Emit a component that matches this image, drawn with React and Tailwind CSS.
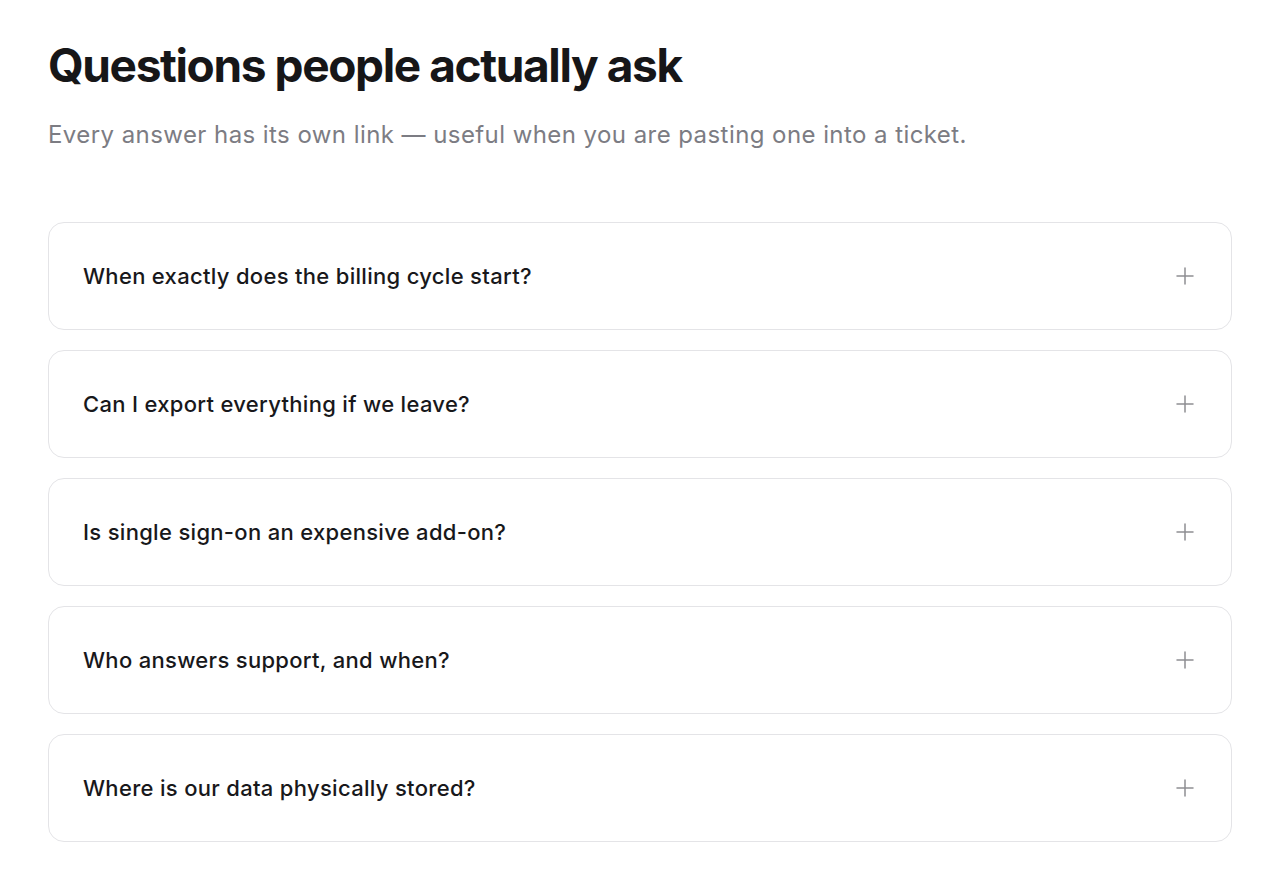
import { useState } from "react";

const questions = [
  "When exactly does the billing cycle start?",
  "Can I export everything if we leave?",
  "Is single sign-on an expensive add-on?",
  "Who answers support, and when?",
  "Where is our data physically stored?",
];

const PlusIcon = () => (
  <svg width="18" height="18" viewBox="0 0 18 18" fill="none" stroke="#8e8e93" strokeWidth="1.5" strokeLinecap="round">
    <path d="M9 1v16M1 9h16" />
  </svg>
);

const FaqItem = ({ question }) => {
  const [open, setOpen] = useState(false);
  return (
    <div className="rounded-2xl border border-[#e4e4e7] bg-white">
      <button
        onClick={() => setOpen(!open)}
        className="flex h-[106px] w-full items-center justify-between pl-[34px] pr-[37px] text-left"
      >
        <span className="text-[22px] font-medium tracking-[0.014em] text-[#18181b]">{question}</span>
        <PlusIcon />
      </button>
    </div>
  );
};

export default function App() {
  return (
    <div className="min-h-screen bg-white px-12 pt-[38px] font-['Inter',sans-serif]">
      <h1 className="text-[46px] leading-[1.2] font-bold tracking-[-0.03em] text-[#161618]">
        Questions people actually ask
      </h1>
      <p className="mt-[24px] text-[24px] tracking-[0.018em] text-[#7c7c83]">
        Every answer has its own link — useful when you are pasting one into a ticket.
      </p>
      <div className="mt-[69px] flex flex-col gap-5">
        {questions.map((q) => (
          <FaqItem key={q} question={q} />
        ))}
      </div>
    </div>
  );
}
